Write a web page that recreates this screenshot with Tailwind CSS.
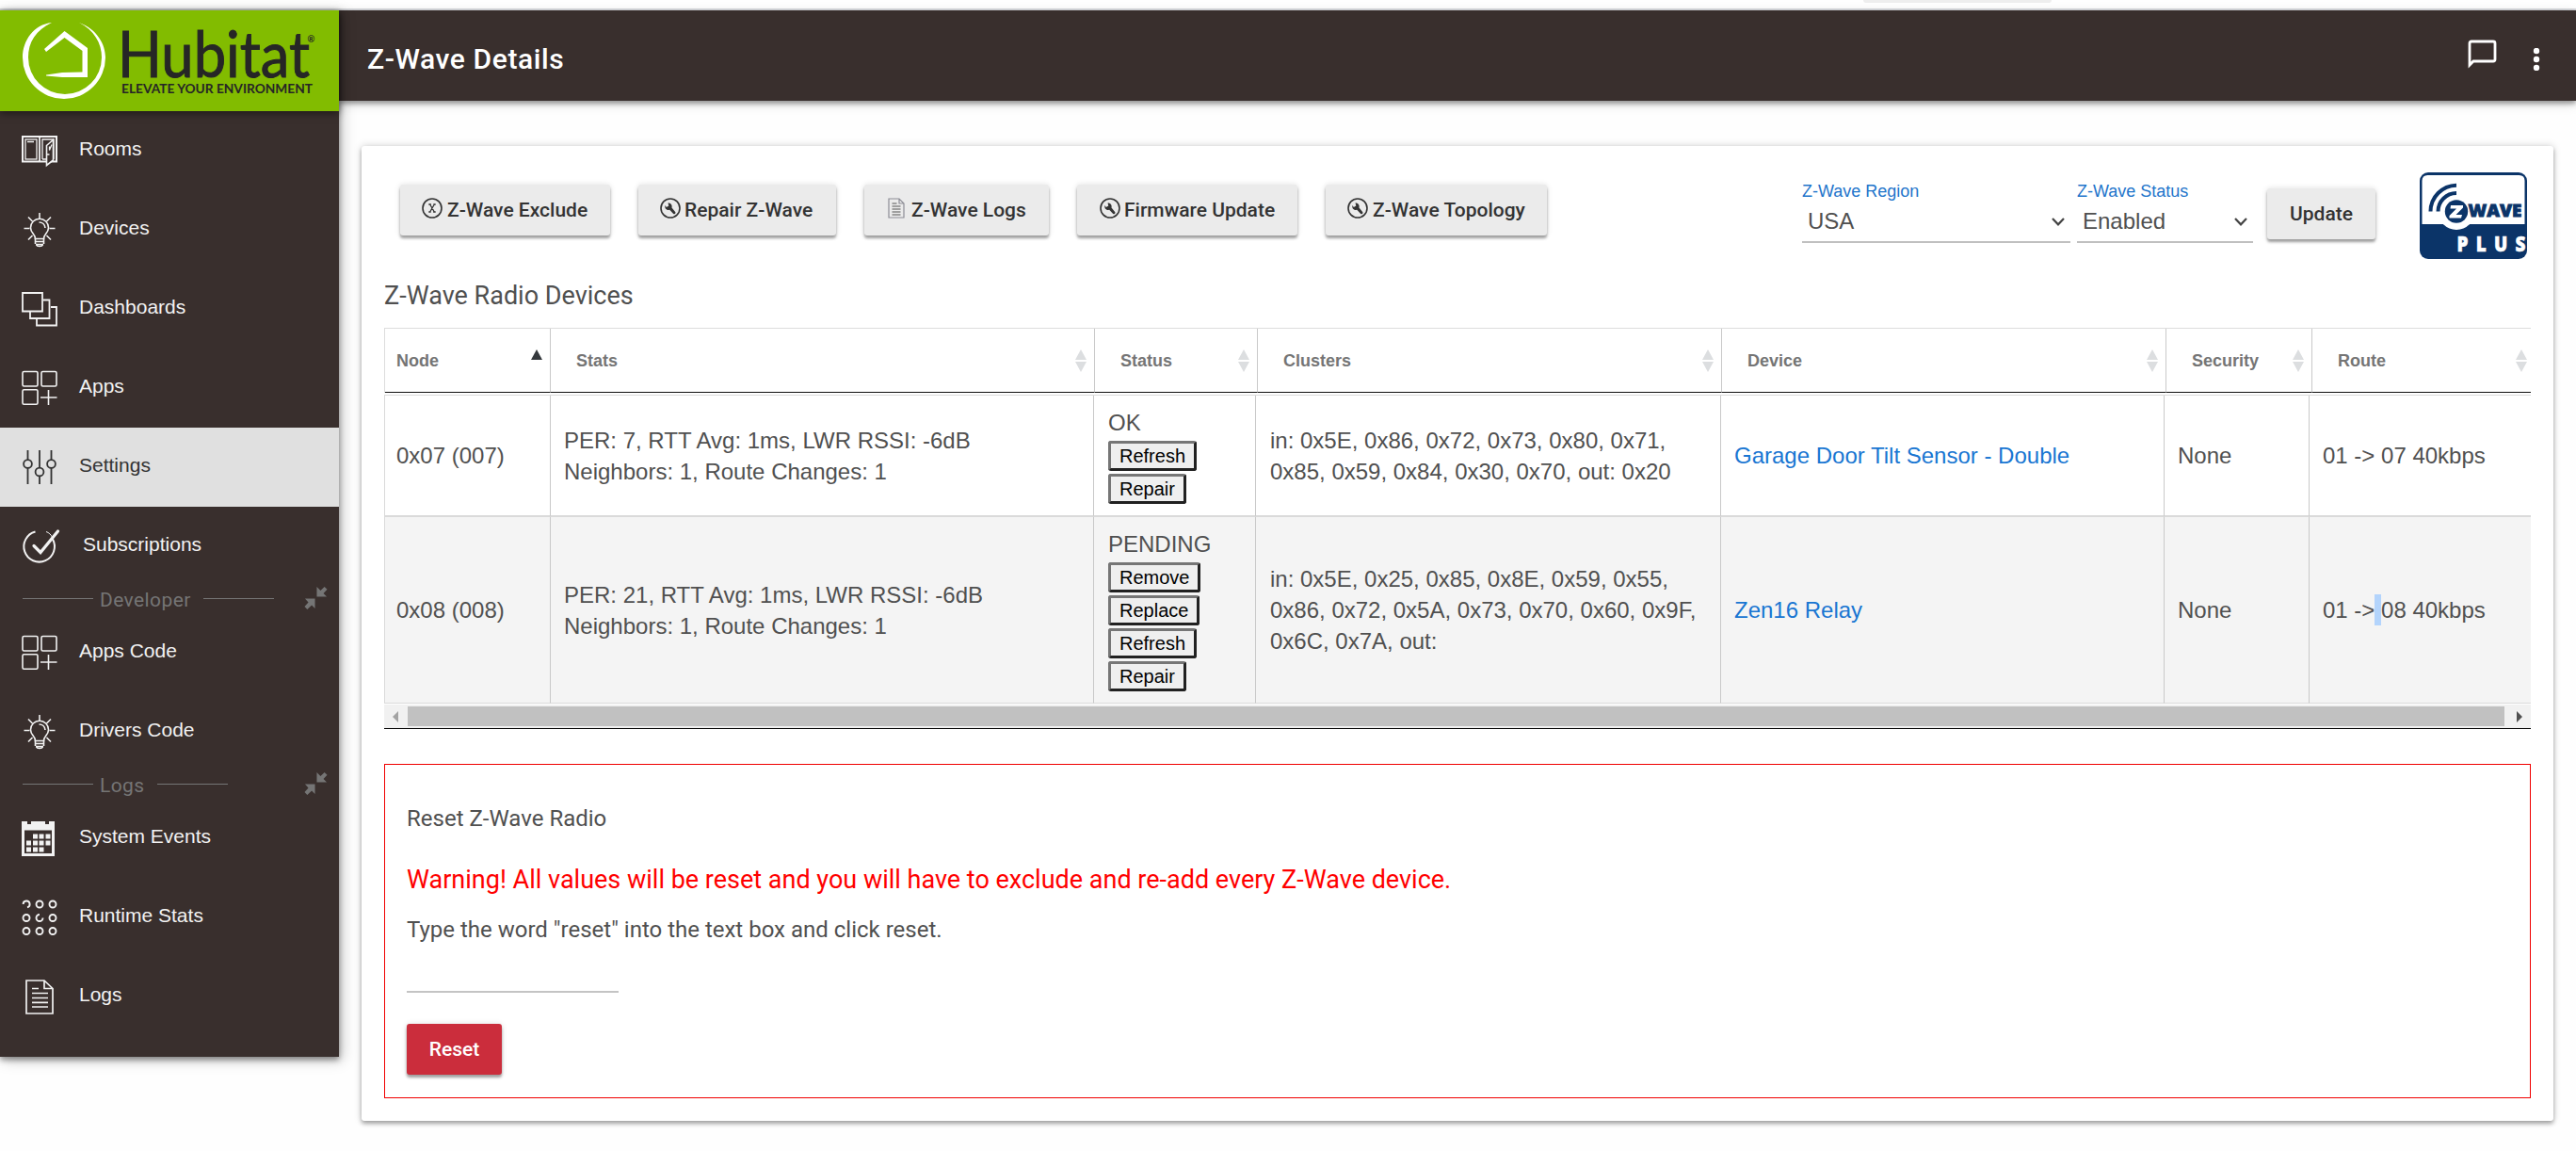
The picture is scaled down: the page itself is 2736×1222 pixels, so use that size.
<!DOCTYPE html>
<html lang="en">
<head>
    <meta charset="UTF-8" />
    <meta name="viewport" content="width=device-width, initial-scale=1.0" />
    <title>Z-Wave Details</title>
    <script src="https://cdn.jsdelivr.net/npm/@tailwindcss/browser@4"></script>
</head>
<body class="h-[1222px] overflow-hidden bg-[#fefefe] font-['Liberation_Sans',sans-serif] text-2xl text-[#505050]">

    <!-- icons used more than once -->
    <svg class="hidden">
        <symbol id="bulb" viewBox="0 0 40 40">
            <g fill="none" stroke="currentColor" stroke-width="1.6">
                <path d="M15.5 29.5c0-5-5-6-5-11.8a9.5 9.5 0 0 1 19 0c0 5.800-5 6.800-5 11.800z" />
                <path d="M15.500 32.500h9M16 35.500h8M16.500 36c1 2 6 2 7 0M15.500 29v6M24.500 29v6" />
                <path d="M19.500 12c3.500 0 6.200 2.500 6.500 6" />
                <path d="M20 2v6M3.500 18.500h6M30.500 18.500h6M8 6.500l4.500 4.500M32 6.500l-4.500 4.500M8 30.500l4.500-4.500M32 30.500l-4.500-4.500" />
            </g>
        </symbol>
        <symbol id="apps" viewBox="0 0 40 40">
            <g fill="none" stroke="currentColor" stroke-width="1.6">
                <rect x="2" y="2.500" width="16" height="15.500" rx="1.500" />
                <rect x="22" y="2.500" width="16" height="15.500" rx="1.500" />
                <rect x="2" y="21.800" width="16" height="15.500" rx="1.500" />
                <path d="M29.500 22v16M21 30h17.500" />
            </g>
        </symbol>
        <symbol id="collapse" viewBox="0 0 26 26">
            <path fill="currentColor" d="M14 1v11h11l-3.600-3.600L25.500 4l-3-3-4.400 4.200zM1 14h11v11l-3.600-3.600L3.500 26 .5 23l4.200-4.800z" />
        </symbol>
        <symbol id="wrench" viewBox="0 0 24 24">
            <circle cx="12" cy="12" r="10" fill="none" stroke="currentColor" stroke-width="1.600" />
            <path fill="currentColor" d="M9.500 6.500l.8 3-2.500 1.500L6.500 9c-.8 2.500.8 5 3.500 5l1.200-.2 4 4.200c1.500 1 3-.8 2-2l-3.700-4.500c.8-2.500-1-5.300-4-5z" />
        </symbol>
        <symbol id="sort" viewBox="0 0 12 24">
            <path fill="currentColor" d="M6 0l6 11H0zM6 24l6-11H0z" />
        </symbol>
        <symbol id="chevron" viewBox="0 0 14 9">
            <path fill="none" stroke="#444" stroke-width="2.200" d="M1 1l6 6.300L13 1" />
        </symbol>
    </svg>

    <!-- bottom of the browser toolbar -->
    <div class="h-[11px] border-b-2 border-[#dadce0] bg-white">
        <div class="ml-[1979px] h-[3px] w-[200px] rounded-b-full bg-[#eee]"></div>
    </div>

    <div class="flex items-start">
        <aside class="relative z-10 h-[1111px] w-[360px] shrink-0 bg-[#392f2d] text-[21px] text-[#f2f2f2] shadow-[0_3px_6px_rgba(0,0,0,.4),3px_3px_14px_rgba(0,0,0,.25)]">
            <div class="relative h-[107px] bg-[#82bc00] shadow-[0_2px_8px_rgba(0,0,0,.5)]">
                <svg class="block h-[107px] w-[360px]" viewBox="0 11 360 107">
                    <path fill="#fff" d="M55 24C36 26 24 43 24 61a44 44 0 0 0 88 0C112 47 103 31 84 24c16 8 24 22 24 37a39 39 0 0 1-78 0C30 45 38 32 55 24z" />
                    <path fill="#fff" d="M47 52l21.500-19L93 51v31H66l-17-1.500v-1L66 77l21.500-.5V54l-19-14L49 55z" />
                    <text x="125" y="82" textLength="204" lengthAdjust="spacingAndGlyphs" font-family="Lato" font-size="67" fill="#262626" stroke="#262626" stroke-width="1">Hubitat</text>
                    <text x="129" y="99.300" textLength="203" lengthAdjust="spacingAndGlyphs" font-family="Lato" font-size="12.500" font-weight="700" fill="#262626">ELEVATE YOUR ENVIRONMENT</text>
                    <text x="326.500" y="45" font-family="Lato" font-size="9.500" font-weight="700" fill="#262626">®</text>
                </svg>
            </div>
            <nav>
                <a class="flex h-[84px] items-center pl-[22px]">
                    <svg class="size-10 shrink-0" viewBox="0 0 40 40" fill="none" stroke="currentColor">
                        <rect x="2" y="5" width="36" height="26.500" stroke-width="2" />
                        <path stroke-width="1.800" d="M20 5v26.500" />
                        <rect x="5" y="8" width="12" height="21" stroke-width="1.300" />
                        <path stroke-width="1.300" d="M7 10.500h7M23 29V8h12v21M23 29h4M33 29h2" />
                        <path fill="#392f2d" stroke-width="1.600" d="M27.500 14.500l7-6v21.500l-7 5.500z" />
                        <path stroke-width="1.300" d="M30.500 15.500v4l2.500-6M28 24h2.500" />
                    </svg>
                    <span class="ml-[22px] pb-[5px]">Rooms</span>
                </a>
                <a class="flex h-[84px] items-center pl-[22px]">
                    <svg class="size-10 shrink-0"><use href="#bulb" /></svg>
                    <span class="ml-[22px] pb-[5px]">Devices</span>
                </a>
                <a class="flex h-[84px] items-center pl-[22px]">
                    <svg class="size-10 shrink-0" viewBox="0 0 40 40" fill="none" stroke="currentColor" stroke-width="1.800">
                        <path d="M2 3h21v19.500H2zM24 10.500h6.500v19.500h-20.500v-7M32 18h6v19.500h-21v-7" />
                    </svg>
                    <span class="ml-[22px] pb-[5px]">Dashboards</span>
                </a>
                <a class="flex h-[84px] items-center pl-[22px]">
                    <svg class="size-10 shrink-0"><use href="#apps" /></svg>
                    <span class="ml-[22px] pb-[5px]">Apps</span>
                </a>
                <a class="flex h-[84px] items-center bg-[#e0e0e0] pl-[22px] text-[#333]">
                    <svg class="size-10 shrink-0" viewBox="0 0 40 40" fill="none" stroke="currentColor" stroke-width="1.800">
                        <path d="M7.500 2v10M7.500 21v17M20 2v18.500M20 29.500v8.500M32.500 2v10M32.500 21v17" />
                        <circle cx="7.500" cy="16.500" r="4.400" />
                        <circle cx="20" cy="25" r="4.400" />
                        <circle cx="32.500" cy="16.500" r="4.400" />
                    </svg>
                    <span class="ml-[22px] pb-[5px]">Settings</span>
                </a>
                <a class="flex h-[84px] items-center pl-[22px]">
                    <svg class="size-10 shrink-0 overflow-visible" viewBox="0 0 40 40" fill="none" stroke="currentColor">
                        <path stroke-width="2" d="M15.500 4.500A16.300 16.300 0 1 0 34 12.500" />
                        <path stroke-width="1" d="M27 4.500c3 1 5 3 7 6.500" />
                        <path stroke-width="3.200" stroke-linecap="round" d="M14 19.500l7 7L39.500 4" />
                    </svg>
                    <span class="ml-[26px] pb-[5px]">Subscriptions</span>
                </a>

                <div class="flex h-[29px] items-center pl-6 font-[Roboto] tracking-[.4px] text-[#757575]">
                    <div class="mb-[3px] h-px w-[75px] bg-[#757575]"></div>
                    <span class="ml-[7px]">Developer</span>
                    <div class="mb-[3px] ml-[13px] h-px w-[75px] bg-[#757575]"></div>
                    <svg class="mr-3 mb-[5px] ml-auto size-[25px]"><use href="#collapse" /></svg>
                </div>
                <a class="flex h-[84px] items-center pl-[22px]">
                    <svg class="size-10 shrink-0"><use href="#apps" /></svg>
                    <span class="ml-[22px] pb-[5px]">Apps Code</span>
                </a>
                <a class="flex h-[84px] items-center pl-[22px]">
                    <svg class="size-10 shrink-0"><use href="#bulb" /></svg>
                    <span class="ml-[22px] pb-[5px]">Drivers Code</span>
                </a>

                <div class="flex h-[29px] items-center pl-6 font-[Roboto] tracking-[.4px] text-[#757575]">
                    <div class="mb-[3px] h-px w-[75px] bg-[#757575]"></div>
                    <span class="ml-[7px]">Logs</span>
                    <div class="mb-[3px] ml-[13px] h-px w-[75px] bg-[#757575]"></div>
                    <svg class="mr-3 mb-[5px] ml-auto size-[25px]"><use href="#collapse" /></svg>
                </div>
                <a class="flex h-[84px] items-center pl-[22px]">
                    <svg class="size-10 shrink-0" viewBox="0 0 40 40" fill="currentColor">
                        <path d="M1 2h6v3h4V2h15v3h4V2h6v37H1zM4 11.500V36h29V11.500z" fill-rule="evenodd" />
                        <path d="M13 15.500h5v5h-5zM19.500 15.500h5v5h-5zM26.500 15.500h5v5h-5zM6 22.500h5v5H6zM13 22.500h5v5h-5zM19.500 22.500h5v5h-5zM26.500 22.500h5v5h-5zM6 29.500h5v5H6zM13 29.500h5v5h-5zM19.500 29.500h5v5h-5z" />
                    </svg>
                    <span class="ml-[22px] pb-[5px]">System Events</span>
                </a>
                <a class="flex h-[84px] items-center pl-[22px]">
                    <svg class="size-10 shrink-0" viewBox="0 0 40 40" fill="none" stroke="currentColor" stroke-width="1.900">
                        <path d="M2.600 6A3.500 3.500 0 1 1 7 9.400M23.500 20.500A3.500 3.500 0 1 1 20 17" />
                        <circle cx="20" cy="6" r="3.500" />
                        <circle cx="34" cy="6" r="3.500" />
                        <circle cx="6" cy="20.500" r="3.500" />
                        <circle cx="34" cy="20.500" r="3.500" />
                        <circle cx="6" cy="34.500" r="3.500" />
                        <circle cx="20" cy="34.500" r="3.500" />
                        <circle cx="34" cy="34.500" r="3.500" />
                    </svg>
                    <span class="ml-[22px] pb-[5px]">Runtime Stats</span>
                </a>
                <a class="flex h-[84px] items-center pl-[22px]">
                    <svg class="size-10 shrink-0" viewBox="0 0 40 40" fill="none" stroke="currentColor" stroke-width="1.700">
                        <path d="M6 3h19l9 8.500V38H6zM25 3v8.500h9M12 11.500h7M12 16.500h17M12 21.500h17M12 26.300h17M12 31h17" />
                    </svg>
                    <span class="ml-[22px] pb-[5px]">Logs</span>
                </a>
            </nav>
        </aside>

        <div class="flex min-w-0 grow flex-col">
            <header class="flex h-24 items-center justify-between bg-[#392f2d] pr-[38px] pl-[30px] text-white shadow-[0_3px_5px_rgba(0,0,0,.35),0_3px_12px_rgba(0,0,0,.15)]">
                <h1 class="pt-2 font-[Roboto] text-[30px] font-medium tracking-[.6px]">Z-Wave Details</h1>
                <div class="flex items-center">
                    <svg class="mb-1 h-[31px] w-[31px]" viewBox="0 0 31 31" fill="none" stroke="#fff" stroke-width="3">
                        <path d="M2 27V4q0-2 2-2h23q2 0 2 2v17q0 2-2 2H6z" stroke-width="2.800" />
                    </svg>
                    <svg class="mt-2 ml-[38px] h-6 w-[8px]" viewBox="0 0 8 24" fill="#fff">
                        <circle cx="4" cy="3" r="3.200" />
                        <circle cx="4" cy="12" r="3.200" />
                        <circle cx="4" cy="21" r="3.200" />
                    </svg>
                </div>
            </header>

            <main class="mt-12 mr-6 ml-6 h-[1035px] rounded-[3px] bg-white px-6 shadow-[0_3px_4px_rgba(0,0,0,.3),0_0_8px_rgba(0,0,0,.18)]">
                <div class="flex h-[142px] items-start pt-[28px]">
                    <div class="mt-[13px] ml-[17px] flex gap-[30px] font-[Roboto] text-[21px] font-medium text-[#333]">
                        <button class="flex h-[54px] w-[223px] items-center rounded-[3px] bg-[#ebebeb] pl-[22px] shadow-[0_3px_3px_rgba(0,0,0,.35),0_0_6px_rgba(0,0,0,.12)]">
                            <svg class="mr-[4px] mb-1 size-6" viewBox="0 0 24 24"><circle cx="12" cy="12" r="10" fill="none" stroke="currentColor" stroke-width="1.600" /><path d="M8.300 8h2.600M13.300 8h2.400M8.300 16h2.400M13.100 16h2.600M9.700 8l4.600 8M14.300 8l-4.600 8" fill="none" stroke="currentColor" stroke-width="1.300" /></svg>
                            Z-Wave Exclude
                        </button>
                        <button class="flex h-[54px] w-[210px] items-center rounded-[3px] bg-[#ebebeb] pl-[22px] shadow-[0_3px_3px_rgba(0,0,0,.35),0_0_6px_rgba(0,0,0,.12)]">
                            <svg class="mr-[3px] mb-1 size-6"><use href="#wrench" /></svg>
                            Repair Z-Wave
                        </button>
                        <button class="flex h-[54px] w-[196px] items-center rounded-[3px] bg-[#ebebeb] pl-[24px] shadow-[0_3px_3px_rgba(0,0,0,.35),0_0_6px_rgba(0,0,0,.12)]">
                            <svg class="mr-[6px] mb-1 h-[22px] w-5" viewBox="0 0 20 22" fill="none"><path stroke="#8d8d96" stroke-width="1.200" d="M2 1h11l5 5v15H2zM13 1v5h5" /><path stroke="#555" stroke-width="1.200" d="M5.500 6h5M5.500 9h9M5.500 12h9M5.500 15h9M5.500 18h9" /></svg>
                            Z-Wave Logs
                        </button>
                        <button class="flex h-[54px] w-[234px] items-center rounded-[3px] bg-[#ebebeb] pl-[23px] shadow-[0_3px_3px_rgba(0,0,0,.35),0_0_6px_rgba(0,0,0,.12)]">
                            <svg class="mr-[3px] mb-1 size-6"><use href="#wrench" /></svg>
                            Firmware Update
                        </button>
                        <button class="flex h-[54px] w-[235px] items-center rounded-[3px] bg-[#ebebeb] pl-[22px] shadow-[0_3px_3px_rgba(0,0,0,.35),0_0_6px_rgba(0,0,0,.12)]">
                            <svg class="mr-[4px] mb-1 size-6"><use href="#wrench" /></svg>
                            Z-Wave Topology
                        </button>
                    </div>

                    <div class="mt-[9px] mr-[7px] ml-auto w-[285px]">
                        <div class="text-lg leading-[22px] text-[#1f75cb]">Z-Wave Region</div>
                        <div class="flex h-[44px] items-center justify-between border-b-2 border-[#c0c0c0] pr-[6px] pl-[6px]">
                            <span>USA</span>
                            <svg class="h-[9px] w-[14px]"><use href="#chevron" /></svg>
                        </div>
                    </div>
                    <div class="mt-[9px] w-[187px]">
                        <div class="text-lg leading-[22px] text-[#1f75cb]">Z-Wave Status</div>
                        <div class="flex h-[44px] items-center justify-between border-b-2 border-[#c0c0c0] pr-[6px] pl-[6px]">
                            <span>Enabled</span>
                            <svg class="h-[9px] w-[14px]"><use href="#chevron" /></svg>
                        </div>
                    </div>
                    <button class="mt-[17px] ml-[15px] h-[54px] w-[115px] rounded-[3px] bg-[#ebebeb] font-[Roboto] text-[21px] font-medium text-[#333] shadow-[0_3px_3px_rgba(0,0,0,.35),0_0_6px_rgba(0,0,0,.12)]">Update</button>
                    <svg class="mr-1 ml-[47px] h-[92px] w-[114px]" viewBox="0 0 114 92">
                        <rect width="114" height="92" rx="9" fill="#0b3468" />
                        <path fill="#fff" d="M2.500 55V9q0-6 6-6h97q6 0 6 6v46z" />
                        <circle cx="39" cy="41.500" r="19.500" fill="#fff" />
                        <circle cx="39" cy="41.500" r="12.200" fill="#0b3468" />
                        <path fill="none" stroke="#0b3468" stroke-width="4" d="M11.500 41.500A28 28 0 0 1 39 13.700M19.500 41.500A19.500 19.500 0 0 1 39 22" />
                        <path fill="#fff" d="M33 35h13v2.500L38.500 45H45l-1 3.500H31.500V46l7.500-7.500h-6.500z" />
                        <text x="51.500" y="47.300" textLength="57" lengthAdjust="spacingAndGlyphs" font-family="Open Sans" font-size="17.500" font-weight="800" fill="#0b3468" stroke="#0b3468" stroke-width=".8">WAVE</text>
                        <text transform="translate(39.500 84) scale(.82 1)" textLength="89" font-family="Open Sans" font-size="23" font-weight="800" fill="#fff" stroke="#fff" stroke-width=".6">PLUS</text>
                    </svg>
                </div>

                <h2 class="flex h-[51px] items-center pb-[17px] font-[Roboto] text-[27px] leading-8">Z-Wave Radio Devices</h2>

                <div class="flex h-[426px] w-[2280px] flex-col overflow-hidden border-b border-black">
                    <table class="mb-[2px] h-[69px] w-[2283px] shrink-0 table-fixed border-separate border-spacing-0 border-t border-l border-[#ddd] text-left text-lg text-[#757575]">
                        <colgroup>
                            <col class="w-[176px]" /><col class="w-[578px]" /><col class="w-[173px]" /><col class="w-[493px]" /><col class="w-[472px]" /><col class="w-[155px]" /><col />
                        </colgroup>
                        <thead>
                            <tr class="h-[68px]">
                                <th class="border-r border-b border-r-[#c9c9c9] border-b-[#111] py-0 pr-[8px] pl-[12px]">
                                    <div class="flex items-center justify-between">Node <svg class="mb-3 h-[11px] w-3 text-[#35393d]" viewBox="0 0 12 11"><path fill="currentColor" d="M6 0l6 11H0z" /></svg></div>
                                </th>
                                <th class="border-r border-b border-r-[#c9c9c9] border-b-[#111] py-0 pr-[8px] pl-[27px]">
                                    <div class="flex items-center justify-between">Stats <svg class="h-6 w-3 text-[#dcdee0]"><use href="#sort" /></svg></div>
                                </th>
                                <th class="border-r border-b border-r-[#c9c9c9] border-b-[#111] py-0 pr-[8px] pl-[27px]">
                                    <div class="flex items-center justify-between">Status <svg class="h-6 w-3 text-[#dcdee0]"><use href="#sort" /></svg></div>
                                </th>
                                <th class="border-r border-b border-r-[#c9c9c9] border-b-[#111] py-0 pr-[8px] pl-[27px]">
                                    <div class="flex items-center justify-between">Clusters <svg class="h-6 w-3 text-[#dcdee0]"><use href="#sort" /></svg></div>
                                </th>
                                <th class="border-r border-b border-r-[#c9c9c9] border-b-[#111] py-0 pr-[8px] pl-[27px]">
                                    <div class="flex items-center justify-between">Device <svg class="h-6 w-3 text-[#dcdee0]"><use href="#sort" /></svg></div>
                                </th>
                                <th class="border-r border-b border-r-[#c9c9c9] border-b-[#111] py-0 pr-[8px] pl-[27px]">
                                    <div class="flex items-center justify-between">Security <svg class="h-6 w-3 text-[#dcdee0]"><use href="#sort" /></svg></div>
                                </th>
                                <th class="border-r border-b border-r-[#c9c9c9] border-b-[#111] py-0 pr-[6px] pl-[27px]">
                                    <div class="flex items-center justify-between">Route <svg class="h-6 w-3 text-[#dcdee0]"><use href="#sort" /></svg></div>
                                </th>
                            </tr>
                        </thead>
                    </table>
                    <table class="h-[328px] w-[2290px] shrink-0 table-fixed border-separate border-spacing-0 border-t border-l border-[#dadada] leading-[33px]">
                        <colgroup>
                            <col class="w-[176px]" /><col class="w-[577px]" /><col class="w-[172px]" /><col class="w-[494px]" /><col class="w-[471px]" /><col class="w-[154px]" /><col />
                        </colgroup>
                        <tbody>
                            <tr class="h-[129px]">
                                <td class="border-r border-b-2 border-r-[#c9c9c9] border-b-[#dadada] py-0 pl-3">0x07 (007)</td>
                                <td class="border-r border-b-2 border-r-[#c9c9c9] border-b-[#dadada] py-0 pl-[14px]">PER: 7, RTT Avg: 1ms, LWR RSSI: -6dB<br />Neighbors: 1, Route Changes: 1</td>
                                <td class="border-r border-b-2 border-r-[#c9c9c9] border-b-[#dadada] py-0 pl-[15px]">
                                    <div>OK</div>
                                    <div class="flex flex-col items-start gap-[3px] pt-[3px] text-xl leading-[26px] text-black">
                                        <button class="rounded-[3px] border-3 border-[#767676] border-r-[#212121] border-b-[#212121] bg-[#efefef] px-[9px]">Refresh</button>
                                        <button class="rounded-[3px] border-3 border-[#767676] border-r-[#212121] border-b-[#212121] bg-[#efefef] px-[9px]">Repair</button>
                                    </div>
                                </td>
                                <td class="border-r border-b-2 border-r-[#c9c9c9] border-b-[#dadada] py-0 pl-[15px]">in: 0x5E, 0x86, 0x72, 0x73, 0x80, 0x71,<br />0x85, 0x59, 0x84, 0x30, 0x70, out: 0x20</td>
                                <td class="border-r border-b-2 border-r-[#c9c9c9] border-b-[#dadada] py-0 pl-[14px] text-[#1976d2]">Garage Door Tilt Sensor - Double</td>
                                <td class="border-r border-b-2 border-r-[#c9c9c9] border-b-[#dadada] py-0 pl-[14px]">None</td>
                                <td class="border-b-2 border-b-[#dadada] py-0 pl-[14px]">01 -&gt; 07 40kbps</td>
                            </tr>
                            <tr class="h-[198px] bg-[#f4f4f4]">
                                <td class="border-r border-b border-r-[#c9c9c9] border-b-[#dadada] py-0 pl-3">0x08 (008)</td>
                                <td class="border-r border-b border-r-[#c9c9c9] border-b-[#dadada] py-0 pl-[14px]">PER: 21, RTT Avg: 1ms, LWR RSSI: -6dB<br />Neighbors: 1, Route Changes: 1</td>
                                <td class="border-r border-b border-r-[#c9c9c9] border-b-[#dadada] py-0 pl-[15px]">
                                    <div>PENDING</div>
                                    <div class="flex flex-col items-start gap-[3px] pt-[3px] text-xl leading-[26px] text-black">
                                        <button class="rounded-[3px] border-3 border-[#767676] border-r-[#212121] border-b-[#212121] bg-[#efefef] px-[9px]">Remove</button>
                                        <button class="rounded-[3px] border-3 border-[#767676] border-r-[#212121] border-b-[#212121] bg-[#efefef] px-[9px]">Replace</button>
                                        <button class="rounded-[3px] border-3 border-[#767676] border-r-[#212121] border-b-[#212121] bg-[#efefef] px-[9px]">Refresh</button>
                                        <button class="rounded-[3px] border-3 border-[#767676] border-r-[#212121] border-b-[#212121] bg-[#efefef] px-[9px]">Repair</button>
                                    </div>
                                </td>
                                <td class="border-r border-b border-r-[#c9c9c9] border-b-[#dadada] py-0 pl-[15px]">in: 0x5E, 0x25, 0x85, 0x8E, 0x59, 0x55,<br />0x86, 0x72, 0x5A, 0x73, 0x70, 0x60, 0x9F,<br />0x6C, 0x7A, out:</td>
                                <td class="border-r border-b border-r-[#c9c9c9] border-b-[#dadada] py-0 pl-[14px] text-[#1976d2]">Zen16 Relay</td>
                                <td class="border-r border-b border-r-[#c9c9c9] border-b-[#dadada] py-0 pl-[14px]">None</td>
                                <td class="border-b border-b-[#dadada] py-0 pl-[14px]">01 -&gt;<span class="bg-[#b3d4fc] py-[3px]"> </span>08 40kbps</td>
                            </tr>
                        </tbody>
                    </table>
                    <!-- horizontal scrollbar -->
                    <div class="mt-px flex min-h-0 grow items-center bg-[#f1f1f1]">
                        <svg class="mr-[10px] ml-[9px] h-3 w-[6px]" viewBox="0 0 6 12"><path fill="#a3a3a3" d="M6 0v12L0 6z" /></svg>
                        <div class="h-[21px] grow bg-[#c1c1c1]"></div>
                        <svg class="mr-[9px] ml-[13px] h-3 w-[6px]" viewBox="0 0 6 12"><path fill="#505050" d="M0 0v12l6-6z" /></svg>
                    </div>
                </div>

                <section class="mt-[37px] h-[355px] w-[2280px] border border-[#f00000] px-[23px] pt-[41px] font-[Roboto]">
                    <p class="leading-8">Reset Z-Wave Radio</p>
                    <p class="mt-[33px] text-[27px] leading-8 text-[#f00]">Warning! All values will be reset and you will have to exclude and re-add every Z-Wave device.</p>
                    <p class="mt-[21px] leading-8">Type the word "reset" into the text box and click reset.</p>
                    <div class="mt-[49px] w-[225px] border-b-2 border-[#c4c4c4]"></div>
                    <button class="mt-[33px] h-[54px] w-[101px] rounded-[3px] bg-[#cb2d3c] text-[21px] font-medium text-white shadow-[0_3px_3px_rgba(0,0,0,.35),0_0_6px_rgba(0,0,0,.12)]">Reset</button>
                </section>
            </main>
        </div>
    </div>
</body>
</html>
